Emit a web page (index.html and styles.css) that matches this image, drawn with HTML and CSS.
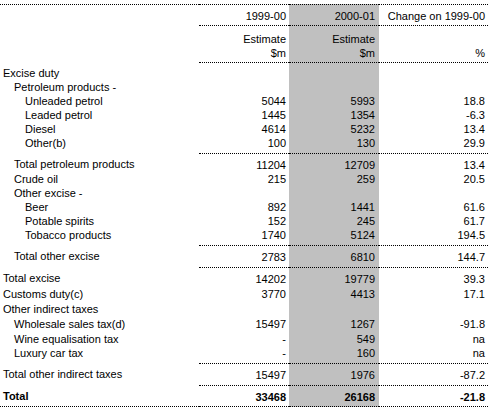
FILE: index.html
```html
<!DOCTYPE html>
<html>
<head>
<meta charset="utf-8">
<link rel="stylesheet" href="styles.css">
</head>
<body>
<table class="budget">
  <colgroup>
    <col class="c-label"><col class="c-num"><col class="c-est"><col class="c-chg">
  </colgroup>
  <thead>
    <tr class="hrow1"><th class="lbl"></th><th>1999-00</th><th class="est">2000-01</th><th>Change on 1999-00</th></tr>
    <tr class="hrow2"><th class="lbl"></th><th>Estimate<br>$m</th><th class="est">Estimate<br>$m</th><th><br>%</th></tr>
  </thead>
  <tbody>
    <tr class="sep"><td class="lbl">Excise duty</td><td></td><td class="est"></td><td></td></tr>
    <tr><td class="lbl l1">Petroleum products -</td><td></td><td class="est"></td><td></td></tr>
    <tr><td class="lbl l2">Unleaded petrol</td><td>5044</td><td class="est">5993</td><td>18.8</td></tr>
    <tr><td class="lbl l2">Leaded petrol</td><td>1445</td><td class="est">1354</td><td>-6.3</td></tr>
    <tr><td class="lbl l2">Diesel</td><td>4614</td><td class="est">5232</td><td>13.4</td></tr>
    <tr class="end"><td class="lbl l2">Other(b)</td><td>100</td><td class="est">130</td><td>29.9</td></tr>
    <tr class="sep"><td class="lbl l1">Total petroleum products</td><td>11204</td><td class="est">12709</td><td>13.4</td></tr>
    <tr><td class="lbl l1">Crude oil</td><td>215</td><td class="est">259</td><td>20.5</td></tr>
    <tr><td class="lbl l1">Other excise -</td><td></td><td class="est"></td><td></td></tr>
    <tr><td class="lbl l2">Beer</td><td>892</td><td class="est">1441</td><td>61.6</td></tr>
    <tr><td class="lbl l2">Potable spirits</td><td>152</td><td class="est">245</td><td>61.7</td></tr>
    <tr class="end"><td class="lbl l2">Tobacco products</td><td>1740</td><td class="est">5124</td><td>194.5</td></tr>
    <tr class="sep end"><td class="lbl l1">Total other excise</td><td>2783</td><td class="est">6810</td><td>144.7</td></tr>
    <tr class="sep loose"><td class="lbl">Total excise</td><td>14202</td><td class="est">19779</td><td>39.3</td></tr>
    <tr class="loose"><td class="lbl">Customs duty(c)</td><td>3770</td><td class="est">4413</td><td>17.1</td></tr>
    <tr class="loose"><td class="lbl">Other indirect taxes</td><td></td><td class="est"></td><td></td></tr>
    <tr class="loose"><td class="lbl l1">Wholesale sales tax(d)</td><td>15497</td><td class="est">1267</td><td>-91.8</td></tr>
    <tr><td class="lbl l1">Wine equalisation tax</td><td>-</td><td class="est">549</td><td>na</td></tr>
    <tr class="end"><td class="lbl l1">Luxury car tax</td><td>-</td><td class="est">160</td><td>na</td></tr>
    <tr class="sep end"><td class="lbl">Total other indirect taxes</td><td>15497</td><td class="est">1976</td><td>-87.2</td></tr>
    <tr class="sep total"><td class="lbl">Total</td><td>33468</td><td class="est">26168</td><td>-21.8</td></tr>
  </tbody>
</table>
</body>
</html>
```

FILE: styles.css
```css
html, body {
  margin: 0;
  padding: 0;
  background: #ffffff;
}

body {
  padding-top: 4px;
  font-family: "Liberation Sans", Arial, sans-serif;
  font-size: 11px;
  line-height: 14px;
  color: #000000;
}

.budget {
  border-collapse: separate;
  border-spacing: 0;
  width: 488px;
  table-layout: fixed;
}

.c-label { width: 199px; }
.c-num { width: 90px; }
.c-est { width: 90px; }
.c-chg { width: 109px; }

.budget th,
.budget td {
  padding: 0 3px 0 0;
  text-align: right;
  font-weight: normal;
  vertical-align: top;
  white-space: nowrap;
}

.budget .lbl {
  text-align: left;
  padding-left: 3px;
  padding-right: 0;
}

.budget .l1 { padding-left: 14px; }
.budget .l2 { padding-left: 25px; }

.budget .est {
  background: #c0c0c0;
  padding-right: 4px;
}

.hrow1 > th {
  border-top: 1px dotted #000000;
  padding-top: 4px;
  padding-bottom: 2px;
}

.hrow2 > th {
  padding-top: 6px;
  padding-bottom: 2px;
}

.hrow2 > th:not(.lbl) {
  border-top: 1px dotted #000000;
}

.sep > td {
  padding-top: 4px;
}

.sep > td:not(.lbl) {
  border-top: 1px dotted #000000;
}

.end > td {
  padding-bottom: 3px;
}

.loose > td {
  padding-bottom: 1px;
}

.total > td {
  font-weight: bold;
  padding-bottom: 2px;
  border-bottom: 1px dotted #000000;
}
```
